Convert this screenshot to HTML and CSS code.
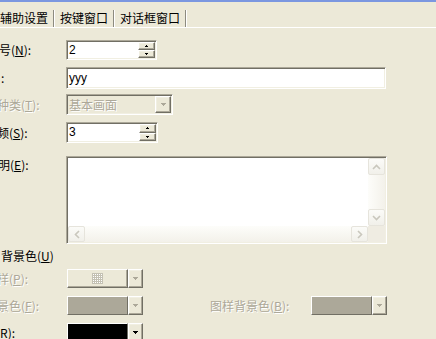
FILE: index.html
```html
<!DOCTYPE html>
<html>
<head>
<meta charset="utf-8">
<link rel="stylesheet" href="styles.css">
</head>
<body>
<div class="topbar"></div>
<div class="tabs">
  <div class="tab first">辅助设置</div>
  <div class="tab">按键窗口</div>
  <div class="tab">对话框窗口</div>
</div>
<div class="form">
  <div class="row r1">
    <div class="label"><span class="lt off1">号(<u>N</u>):</span></div>
    <div class="sunken spin w91">
      <div class="val">2</div>
      <div class="spinbtns">
        <div class="raised sb"><svg width="3" height="2" viewBox="0 0 3 2"><path d="M1 0h1v1h1v1H0V1h1z" fill="#000"/></svg></div>
        <div class="raised sb"><svg width="3" height="2" viewBox="0 0 3 2"><path d="M0 0h3v1H2v1H1V1H0z" fill="#000"/></svg></div>
      </div>
    </div>
  </div>
  <div class="row r2">
    <div class="label"><span class="lt off0">:</span></div>
    <div class="sunken text w320"><div class="val">yyy</div></div>
  </div>
  <div class="row r3">
    <div class="label"><span class="lt off3 dis">种类(<u>T</u>):</span></div>
    <div class="sunken combo w107">
      <div class="val dis">基本画面</div>
      <div class="raised dd"><svg width="5" height="3" viewBox="0 0 5 3"><path d="M0 0h5v1H4v1H3v1H2V2H1V1H0z" fill="#aca899"/></svg></div>
    </div>
  </div>
  <div class="row r4">
    <div class="label"><span class="lt off3">频(<u>S</u>):</span></div>
    <div class="sunken spin w92">
      <div class="val">3</div>
      <div class="spinbtns">
        <div class="raised sb"><svg width="3" height="2" viewBox="0 0 3 2"><path d="M1 0h1v1h1v1H0V1h1z" fill="#000"/></svg></div>
        <div class="raised sb"><svg width="3" height="2" viewBox="0 0 3 2"><path d="M0 0h3v1H2v1H1V1H0z" fill="#000"/></svg></div>
      </div>
    </div>
  </div>
  <div class="row r5">
    <div class="label top"><span class="lt off2">明(<u>E</u>):</span></div>
    <div class="sunken memo">
      <div class="memo-area"></div>
      <div class="vscroll">
        <div class="scbtn"><svg width="9" height="6" viewBox="0 0 9 6"><path d="M1 5l3.5-3.5L8 5" fill="none" stroke="#c9c7bd" stroke-width="1.6"/></svg></div>
        <div class="vtrack"></div>
        <div class="scbtn"><svg width="9" height="6" viewBox="0 0 9 6"><path d="M1 1l3.5 3.5L8 1" fill="none" stroke="#c9c7bd" stroke-width="1.6"/></svg></div>
      </div>
      <div class="hscroll">
        <div class="scbtn"><svg width="6" height="9" viewBox="0 0 6 9"><path d="M5 1L1.5 4.5 5 8" fill="none" stroke="#c9c7bd" stroke-width="1.6"/></svg></div>
        <div class="htrack"></div>
        <div class="scbtn"><svg width="6" height="9" viewBox="0 0 6 9"><path d="M1 1l3.5 3.5L1 8" fill="none" stroke="#c9c7bd" stroke-width="1.6"/></svg></div>
      </div>
      <div class="corner"></div>
    </div>
  </div>
  <div class="row r6">
    <div class="heading">背景色(<u>U</u>)</div>
  </div>
  <div class="row r7">
    <div class="label"><span class="lt off3 dis">样(<u>P</u>):</span></div>
    <div class="ccombo">
      <div class="cfill pat">
        <svg width="11" height="11" viewBox="0 0 11 11">
          <rect x="0" y="0" width="11" height="11" fill="#fff"/>
          <path d="M0.5 0V11M2.5 0V11M4.5 0V11M6.5 0V11M8.5 0V11M10.5 0V11M0 0.5H11M0 2.5H11M0 4.5H11M0 6.5H11M0 8.5H11M0 10.5H11" stroke="#c4c1b3" stroke-width="1"/>
        </svg>
      </div>
      <div class="raised carrow"><svg width="5" height="3" viewBox="0 0 5 3"><path d="M0 0h5v1H4v1H3v1H2V2H1V1H0z" fill="#aca899"/></svg></div>
    </div>
  </div>
  <div class="row r8">
    <div class="label"><span class="lt off3 dis">景色(<u>F</u>):</span></div>
    <div class="ccombo">
      <div class="cfill gray"></div>
      <div class="raised carrow"><svg width="5" height="3" viewBox="0 0 5 3"><path d="M0 0h5v1H4v1H3v1H2V2H1V1H0z" fill="#aca899"/></svg></div>
    </div>
    <div class="label2 dis">图样背景色(<u>B</u>):</div>
    <div class="ccombo">
      <div class="cfill gray"></div>
      <div class="raised carrow"><svg width="5" height="3" viewBox="0 0 5 3"><path d="M0 0h5v1H4v1H3v1H2V2H1V1H0z" fill="#aca899"/></svg></div>
    </div>
  </div>
  <div class="row r9">
    <div class="label"><span class="lt off5">(<u>R</u>):</span></div>
    <div class="ccombo">
      <div class="cfill black"></div>
      <div class="raised carrow"><svg width="5" height="3" viewBox="0 0 5 3"><path d="M0 0h5v1H4v1H3v1H2V2H1V1H0z" fill="#000"/></svg></div>
    </div>
  </div>
</div>
</body>
</html>
```
FILE: styles.css
```css
* { box-sizing: border-box; }
html, body {
  margin: 0;
  padding: 0;
  width: 436px;
  height: 339px;
  overflow: hidden;
  background: #ece9d8;
  font-family: "Noto Sans CJK SC", "Noto Sans", sans-serif;
  font-size: 12px;
  color: #000;
}
u { text-decoration: underline; text-underline-offset: 1px; }
.topbar { height: 2px; background: #7b97e0; }
.tabs {
  display: flex;
  height: 26px;
  padding-top: 8px;
  border-bottom: 1px solid #fff;
}
.tab {
  height: 17px;
  line-height: 15px;
  padding: 0 5px 0 5px;
  border-right: 1px solid #8d8b80;
  box-shadow: 1px 0 0 #fff;
  margin-right: 1px;
  white-space: nowrap;
  font-size: 12px;
}
.tab.first { margin-left: -5px; }

.form { display: flex; flex-direction: column; }
.row { display: flex; align-items: center; }
.label { width: 66px; flex: none; white-space: nowrap; line-height: 14px; }
.label.top { align-self: flex-start; padding-top: 2px; }
.lt { display: inline-block; }
.off0 { margin-left: 1px; }
.off1 { margin-left: -1px; }
.off2 { margin-left: -2px; }
.off3 { margin-left: -3px; }
.off5 { margin-left: -4px; }
.dis { color: #aca899; text-shadow: 1px 1px 0 #fff; }

.r1 { margin-top: 12px; }
.r2 { margin-top: 7px; }
.r3 { margin-top: 5px; }
.r4 { margin-top: 7px; }
.r5 { margin-top: 13px; align-items: flex-start; }
.r6 { margin-top: 6px; }
.r7 { margin-top: 7px; }
.r8 { margin-top: 8px; }
.r9 { margin-top: 8px; }

.sunken {
  border: 1px solid;
  border-color: #aca899 #fff #fff #aca899;
  padding: 1px;
  box-shadow: inset 1px 1px 0 #716f64, inset -1px -1px 0 #f1efe2;
  display: flex;
}
.raised {
  border: 1px solid;
  border-color: #fff #716f64 #716f64 #fff;
  box-shadow: inset -1px -1px 0 #aca899, inset 1px 1px 0 #f1efe2;
  background: #ece9d8;
  display: flex;
  align-items: center;
  justify-content: center;
}
.val {
  flex: 1;
  background: #fff;
  font-family: "Liberation Sans", "Noto Sans CJK SC", sans-serif;
  font-size: 12px;
  line-height: 16px;
  padding-left: 1px;
  white-space: nowrap;
}
.w91 { width: 91px; height: 20px; }
.w92 { width: 92px; height: 21px; }
.w320 { width: 320px; height: 22px; }
.w107 { width: 107px; height: 21px; }
.text .val { line-height: 18px; }
.spinbtns { width: 17px; display: flex; flex-direction: column; }
.sb { flex: 1; }
.combo .val {
  background: #ece9d8;
  font-family: "Noto Sans CJK SC", sans-serif;
  line-height: 17px;
}
.dd { width: 16px; }

.memo {
  width: 321px;
  height: 88px;
  display: grid;
  grid-template-columns: 1fr 17px;
  grid-template-rows: 1fr 16px;
  background: #fff;
}
.memo-area { background: #fff; }
.vscroll {
  display: flex;
  flex-direction: column;
  background: linear-gradient(to right, #fdfdfa, #f3f1ea);
}
.hscroll {
  display: flex;
  background: linear-gradient(to bottom, #fdfdfa, #f3f1ea);
}
.vtrack, .htrack { flex: 1; }
.scbtn {
  width: 17px;
  height: 17px;
  flex: none;
  border: 1px solid #e6e4dc;
  border-radius: 2px;
  background: linear-gradient(to bottom, #fbfbf8, #f1f0ea);
  display: flex;
  align-items: center;
  justify-content: center;
}
.hscroll .scbtn { width: 17px; height: 16px; }
.corner { background: #efece2; }

.heading { line-height: 12px; margin-left: 1px; }

.ccombo { display: flex; width: 76px; height: 19px; margin-left: 1px; flex: none; }
.cfill {
  flex: 1;
  border: 1px solid;
  border-color: #fff #716f64 #716f64 #fff;
  display: flex;
  align-items: center;
  justify-content: center;
}
.cfill.pat { background: #ece9d8; box-shadow: inset -1px -1px 0 #aca899; }
.cfill.gray { background: #aca899; }
.cfill.black { background: #000; }
.carrow { width: 15px; flex: none; }
.label2 { width: 101px; margin-left: 67px; flex: none; white-space: nowrap; line-height: 14px; }
.r8 .ccombo + .label2 + .ccombo { margin-left: 0; }
```
